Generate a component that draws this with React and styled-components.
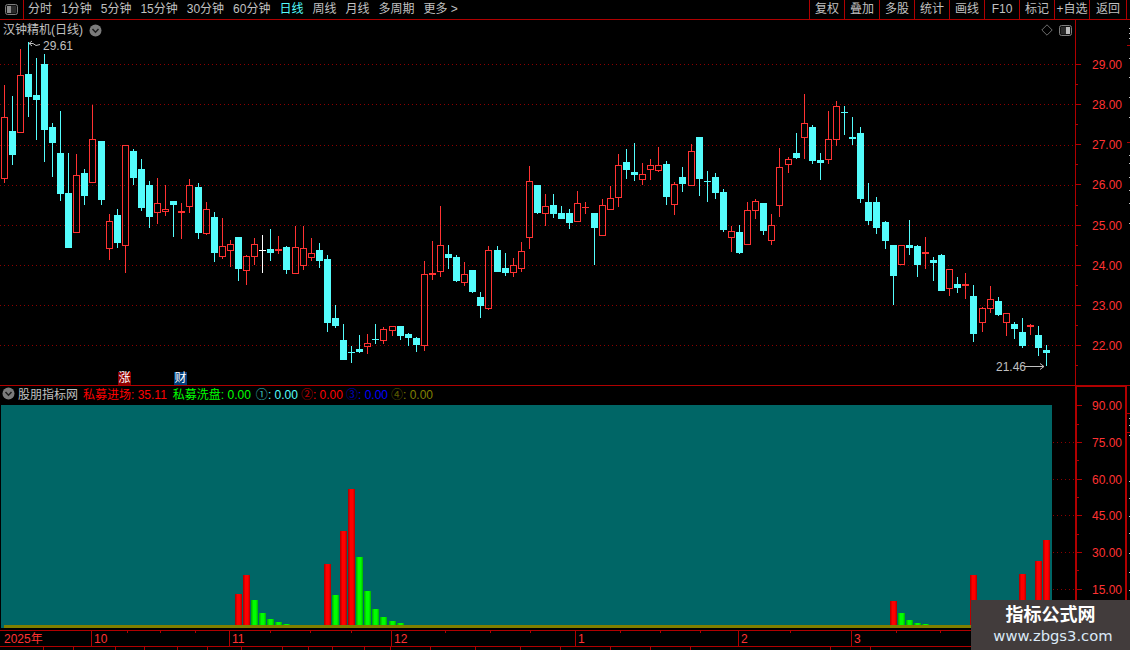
import React from "react";
import styled, { createGlobalStyle } from "styled-components";

const AXIS = "#b00000";
const LABEL = "#ff3232";
const UP = "#ff3232";
const DOWN = "#54fcfc";
const FONT = '"Liberation Sans", "Noto Sans CJK SC", sans-serif';

const Global = createGlobalStyle`
  html, body { margin: 0; padding: 0; background: #000; }
  body { font-family: ${FONT}; font-size: 12px; color: #c0c0c0; }
`;

const Screen = styled.div`
  position: relative;
  width: 1130px;
  height: 650px;
  overflow: hidden;
  background: #000;
  display: flex;
  flex-direction: column;
`;

/* ---------- toolbar ---------- */
const Toolbar = styled.div`
  display: flex;
  align-items: stretch;
  height: 19px;
  border-bottom: 1px solid ${AXIS};
  flex: none;
`;
const ToggleCell = styled.div`
  width: 23px;
  border-right: 1px solid ${AXIS};
  display: flex;
  align-items: center;
  justify-content: center;
  box-sizing: content-box;
  margin-right: 4px;
`;
const Periods = styled.div`
  display: flex;
  align-items: center;
  gap: 9px;
  flex: 1;
`;
const Period = styled.span`
  color: ${(p) => (p.$active ? DOWN : "#c0c0c0")};
  white-space: nowrap;
  line-height: 19px;
`;
const Actions = styled.div`
  display: flex;
  align-items: stretch;
  margin-right: 3px;
`;
const Action = styled.div`
  width: 34px;
  border-left: 1px solid ${AXIS};
  text-align: center;
  line-height: 19px;
  white-space: nowrap;
  color: #c0c0c0;
  &:last-child {
    width: 36px;
    border-right: 1px solid ${AXIS};
  }
`;

/* ---------- panes ---------- */
const Pane = styled.div`
  display: flex;
  flex: none;
  height: ${(p) => p.$h}px;
  border-bottom: ${(p) => (p.$line ? `1px solid ${AXIS}` : "none")};
`;
const Plot = styled.div`
  position: relative;
  width: 1075px;
  flex: none;
`;
const ChartSvg = styled.svg`
  display: block;
  shape-rendering: crispEdges;
`;
const PaneTitle = styled.div`
  position: absolute;
  left: 3px;
  top: 2px;
  display: flex;
  align-items: center;
  gap: 6px;
  line-height: 16px;
  white-space: nowrap;
`;
const PriceNote = styled.span`
  position: absolute;
  left: ${(p) => p.$x}px;
  top: ${(p) => p.$y}px;
  line-height: 14px;
  color: #c0c0c0;
`;
const NewsBadge = styled.span`
  position: absolute;
  left: ${(p) => p.$x}px;
  top: 352px;
  width: 13px;
  height: 13px;
  line-height: 13px;
  text-align: center;
  color: #fff;
  background: ${(p) => p.$bg};
`;
const CornerIcons = styled.div`
  position: absolute;
  right: 3px;
  top: 4px;
  display: flex;
  gap: 6px;
  align-items: center;
`;

/* ---------- axes ---------- */
const Axis = styled.div`
  position: relative;
  width: 52px;
  box-sizing: border-box;
  flex: none;
  display: flex;
  flex-direction: column;
  padding-top: ${(p) => p.$pad}px;
  border-left: ${(p) => p.$thick}px solid ${AXIS};
  border-top: ${(p) => (p.$thick > 1 ? `2px solid ${AXIS}` : "none")};
  border-right: ${(p) => (p.$thick > 1 ? `2px solid ${AXIS}` : "none")};
  margin-top: ${(p) => (p.$thick > 1 ? "-1px" : "0")};
`;
const AxisRow = styled.div`
  position: relative;
  flex: none;
  box-sizing: border-box;
  height: ${(p) => p.$h}px;
  display: flex;
  align-items: center;
  padding-top: 2px;
  padding-left: ${(p) => 16 - (p.$thick - 1)}px;
  color: ${LABEL};
  &::before {
    content: "";
    position: absolute;
    left: 0;
    top: 50%;
    width: 5px;
    height: 1px;
    background: ${AXIS};
  }
  &::after {
    content: "";
    position: absolute;
    left: 0;
    top: 100%;
    width: 2px;
    height: 1px;
    background: ${AXIS};
  }
`;
const SideStrip = styled.svg`
  flex: none;
  width: 3px;
  height: 626px;
  position: absolute;
  left: 1127px;
  top: 20px;
  shape-rendering: crispEdges;
`;

/* ---------- indicator header ---------- */
const IndicatorHeader = styled.div`
  position: absolute;
  left: 2px;
  top: -2px;
  height: 19px;
  display: flex;
  align-items: center;
  white-space: nowrap;
`;
const IndicatorName = styled.span`
  margin: 0 5px 0 3px;
  color: #c0c0c0;
`;
const Reading = styled.span`
  color: ${(p) => p.$c};
  margin-right: ${(p) => p.$gap}px;
`;
const Circled = styled.span`
  font-family: "Noto Sans CJK SC", sans-serif;
  opacity: 0.72;
`;

/* ---------- time axis ---------- */
const TimeAxis = styled.div`
  position: relative;
  flex: none;
  display: flex;
  width: 1127px;
  height: 15px;
  border-top: 1px solid ${AXIS};
  border-bottom: 1px solid ${AXIS};
`;
const Month = styled.div`
  box-sizing: border-box;
  width: ${(p) => p.$w}px;
  flex: ${(p) => (p.$grow ? "1" : "none")};
  padding-left: ${(p) => (p.$first ? 4 : 2)}px;
  border-left: ${(p) => (p.$first ? "none" : `1px solid ${AXIS}`)};
  color: ${LABEL};
  line-height: 17px;
`;
const Tick = styled.i`
  position: absolute;
  left: ${(p) => p.$x}px;
  top: 0;
  width: 1px;
  height: 2px;
  background: ${AXIS};
`;
const BottomStrip = styled.div`
  position: relative;
  flex: 1;
`;
const BottomTick = styled(Tick)`
  height: 4px;
`;

/* ---------- watermark ---------- */
const Watermark = styled.div`
  position: absolute;
  left: 971px;
  top: 600px;
  width: 159px;
  height: 50px;
  background: #423c3c;
  display: flex;
  flex-direction: column;
  align-items: center;
`;
const WatermarkTitle = styled.div`
  font-size: 18px;
  font-weight: 700;
  line-height: 22px;
  margin-top: 4px;
  color: #fff;
`;
const WatermarkUrl = styled.div`
  font-family: "DejaVu Sans", sans-serif;
  font-size: 14.75px;
  line-height: 18px;
  margin: 1px 0 0 5px;
  color: #dbe9f7;
`;

/* ---------- data ---------- */
const groups = [
  { x0: 0, y0: 40, rows: [
    ["r",13,135,232,418,428],["c",37,168,273,345,375],["r",61,27,106,280,280],["c",85,5,102,171,231],
    ["c",109,54,165,180,300],["c",133,42,72,270,366],["c",157,250,261,309,411],["c",181,213,339,462,483],
    ["c",205,339,459,624,624],["r",229,342,405,579,579],["c",253,387,399,468,495],["r",277,195,297,429,429],
    ["c",304,303,303,480,495],["r",328,522,543,627,660],["c",352,507,525,609,624],["r",376,315,315,618,699],
    ["c",400,327,333,414,435],["c",424,357,387,504,513],["c",448,423,435,531,564],["r",472,414,489,519,552],
    ["r",496,435,507,516,528],["c",520,483,483,495,591],["f",544,489,513,519,597],["r",568,417,435,501,519],
    ["c",595,429,441,579,597],["r",619,486,507,582,585],["c",643,516,531,639,666],["r",667,534,618,651,657],
    ["r",691,600,612,633,681],["c",715,591,591,687,723],["r",739,645,648,693,735],["r",763,594,612,651,675],
    ["w",787,585,630,633,699],["c",811,567,627,639,663],["f",835,588,627,631,642],
  ]},
  { x0: 280, y0: 130, rows: [
    ["c",19,348,351,420,432],["r",46,288,351,432,432],["r",70,288,354,408,420],["r",94,324,369,384,393],
    ["c",118,339,360,393,414],["c",142,375,387,579,606],["c",166,525,564,588,594],["c",190,582,630,690,690],
    ["x",214,648,666,668,699],["c",238,615,657,666,669],["r",262,612,639,651,672],["x",286,582,627,629,642],
    ["r",310,591,597,633,642],["r",337,588,588,603,618],["c",361,588,588,618,630],["c",385,609,612,624,648],
    ["c",409,621,624,645,666],["r",433,393,432,648,663],["f",457,333,429,435,450],["r",481,228,345,426,441],
    ["c",505,345,372,384,417],["c",529,375,381,453,456],["r",553,396,432,459,468],["c",577,420,420,486,489],
    ["c",601,486,501,528,564],["r",625,348,360,537,540],["c",652,348,360,426,426],["c",676,369,414,429,438],
    ["r",700,384,405,429,441],["r",724,336,363,417,426],["r",748,108,153,324,357],["c",772,165,165,249,252],
  ]},
  { x0: 520, y0: 90, rows: [
    ["r",76,312,348,372,408],["c",100,312,345,372,384],["c",124,348,369,387,387],["c",148,357,369,399,417],
    ["r",172,303,339,396,396],["y",196,336,351,353,372],["c",223,369,369,414,525],["r",247,327,345,438,438],
    ["r",271,288,324,360,360],["r",295,192,225,324,351],["c",319,177,216,240,267],["c",343,159,246,255,273],
    ["r",367,219,252,270,285],["r",391,207,225,240,270],["r",415,171,225,243,246],["c",439,213,222,321,345],
    ["r",463,276,282,345,375],["c",487,231,261,282,306],["r",514,162,183,288,288],["c",538,141,141,267,318],
    ["x",562,243,273,275,336],["c",586,249,261,309,327],["c",610,297,306,420,426],["r",634,408,423,444,486],
    ["c",658,405,426,489,492],["r",682,336,360,465,465],["r",706,327,333,363,387],["c",730,339,339,423,435],
    ["r",754,372,405,453,465],["r",778,174,231,348,381],["r",805,201,207,225,249],["c",829,129,189,204,207],
  ]},
  { x0: 770, y0: 90, rows: [
    ["r",103,12,99,144,207],["c",127,105,111,213,222],["c",151,189,210,219,270],["r",175,63,147,210,222],
    ["r",199,33,48,150,168],["x",223,48,66,68,135],["c",247,81,141,147,165],["c",271,111,129,327,339],
    ["c",295,279,336,393,405],["c",319,321,336,414,432],["c",346,393,396,453,477],["c",370,465,465,558,645],
    ["r",394,465,465,525,525],["c",418,390,465,474,495],["c",442,465,468,525,561],["f",466,441,486,492,537],
    ["c",490,501,510,519,573],["c",514,492,495,603,603],["r",538,537,537,597,618],["c",562,561,582,594,609],
    ["f",586,549,582,588,627],["c",610,585,618,732,756],["r",637,651,654,699,726],["r",661,588,627,657,669],
    ["c",685,621,633,675,678],["r",709,669,669,699,738],["c",733,696,702,717,747],["c",757,684,726,768,774],
    ["f",781,702,705,711,735],["c",805,708,735,774,798],["c",829,765,780,789,828],
  ]},
];

const candles = groups.flatMap(({ x0, y0, rows }) =>
  rows.map(([t, cx, hi, top, bot, lo]) => ({
    t,
    x: Math.floor(x0 + cx / 3),
    hi: Math.round(y0 + hi / 3),
    top: Math.round(y0 + top / 3),
    bot: Math.round(y0 + bot / 3),
    lo: Math.round(y0 + lo / 3),
  }))
);

const toBars = (x0, y0, rows) => rows.map(([k, cx, z]) => ({ k, x: Math.floor(x0 + cx / 3), top: Math.round(y0 + z / 3) }));
const bars = [
  ...toBars(220, 480, [
    ["r",55,342],["r",79,285],["g",103,360],["g",127,399],["g",151,417],["g",175,426],["g",199,432],
    ["r",322,252],["g",346,345],["r",370,153],["r",394,27],["g",418,231],["g",442,333],["g",466,387],
    ["g",490,411],["g",517,423],["g",541,429],
  ]),
  ...toBars(880, 540, [
    ["r",40,183],["g",64,219],["g",88,240],["g",112,249],["g",136,252],["r",280,105],["r",427,102],["r",475,63],["r",499,0],
  ]),
];

const Candle = ({ t, x, hi, top, bot, lo }) => {
  const color = { r: UP, f: UP, y: UP, c: DOWN, x: DOWN, w: "#ffffff" }[t];
  if (t === "r") {
    return (
      <g fill={color}>
        <rect x={x} y={hi} width={1} height={Math.max(top - hi, 0)} />
        <rect x={x} y={bot} width={1} height={Math.max(lo - bot, 0)} />
        <rect x={x - 3 + 0.5} y={top + 0.5} width={6} height={bot - top - 1} fill="none" stroke={color} strokeWidth={1} />
      </g>
    );
  }
  const bodyH = t === "c" ? bot - top : t === "f" ? 2 : 1;
  return (
    <g fill={color}>
      <rect x={x} y={hi} width={1} height={lo - hi} />
      <rect x={x - 3} y={top} width={7} height={bodyH} />
    </g>
  );
};

const priceY = [64, 104, 145, 185, 225, 265, 305, 345];
const priceLabels = ["29.00", "28.00", "27.00", "26.00", "25.00", "24.00", "23.00", "22.00"];
const indicatorLabels = ["90.00", "75.00", "60.00", "45.00", "30.00", "15.00"];
const indicatorY = [442, 479, 515, 552, 589];
const months = [
  { w: 91, t: "2025年", first: true }, { w: 138, t: "10" }, { w: 162, t: "11" },
  { w: 184, t: "12" }, { w: 163, t: "1" }, { w: 113, t: "2" }, { w: 0, t: "3", grow: true },
];
const upperTicks = [127, 160, 195, 270, 310, 351, 445, 490, 530, 620, 660, 700, 790, 896, 940];
const lowerTicks = [43, 73, 115, 144, 177, 207, 241, 282, 308, 332, 364, 390, 430, 475, 520, 560, 610, 650, 690, 830, 870];
const sideWhite = [8, 13, 18, 38, 57, 77, 97, 135, 143, 157, 170, 183, 203, 398, 405, 415, 461, 478, 496, 513, 533, 552, 570, 588];
const sideRed = [25, 122, 393, 412];

const ChevronBadge = () => (
  <svg width="13" height="13" viewBox="0 0 13 13">
    <circle cx="6.5" cy="6.5" r="6" fill="#7b7b7b" />
    <path d="M3.5 5 L6.5 8.2 L9.5 5" fill="none" stroke="#1c1c1c" strokeWidth="1.5" />
  </svg>
);
const PanelIcon = ({ side }) => (
  <svg width="13" height="11" viewBox="0 0 13 11">
    <rect x="0.5" y="0.5" width="12" height="10" rx="2" fill="#111" stroke="#7d7d7d" />
    <rect x={side === "left" ? 2 : 7} y="2" width="4" height="7" fill={side === "left" ? "#8c8c8c" : "#bdbdbd"} />
    <rect x={side === "left" ? 6 : 2} y="2" width="5" height="7" fill="#2a2a2a" />
  </svg>
);
const DiamondIcon = () => (
  <svg width="12" height="12" viewBox="0 0 12 12">
    <path d="M6 .8 L11.2 6 L6 11.2 L.8 6 Z" fill="none" stroke="#6e6e6e" />
  </svg>
);

export default function App() {
  return (
    <Screen>
      <Global />
      <Toolbar>
        <ToggleCell><PanelIcon side="left" /></ToggleCell>
        <Periods>
          <Period>分时</Period>
          <Period>1分钟</Period>
          <Period>5分钟</Period>
          <Period>15分钟</Period>
          <Period>30分钟</Period>
          <Period>60分钟</Period>
          <Period $active>日线</Period>
          <Period>周线</Period>
          <Period>月线</Period>
          <Period>多周期</Period>
          <Period>更多 &gt;</Period>
        </Periods>
        <Actions>
          {["复权", "叠加", "多股", "统计", "画线", "F10", "标记", "+自选", "返回"].map((a) => (
            <Action key={a}>{a}</Action>
          ))}
        </Actions>
      </Toolbar>

      <Pane $h={365} $line>
        <Plot>
          <ChartSvg width="1075" height="365" viewBox="0 20 1075 365">
            {priceY.map((y) => (
              <line key={y} x1="0" x2="1075" y1={y + 0.5} y2={y + 0.5} stroke="#8c0000" strokeDasharray="1 3" />
            ))}
            {candles.map((c, i) => <Candle key={i} {...c} />)}
            <path d="M29 43.5 H33 M29 43.5 L32 41 M29 43.5 L32 46 M33 43.5 L36 45.5 L40 44.5" fill="none" stroke="#c0c0c0" shapeRendering="auto" />
            <path d="M1025 366.5 H1044 M1040 363.5 L1044 366.5 L1040 369.5" fill="none" stroke="#c0c0c0" shapeRendering="auto" />
          </ChartSvg>
          <PaneTitle>
            <span>汉钟精机(日线)</span>
            <ChevronBadge />
          </PaneTitle>
          <PriceNote $x={43} $y={19}>29.61</PriceNote>
          <PriceNote $x={996} $y={340}>21.46</PriceNote>
          <NewsBadge $x={118} $bg="#8c0000">涨</NewsBadge>
          <NewsBadge $x={174} $bg="#003c78">财</NewsBadge>
          <CornerIcons>
            <DiamondIcon />
            <PanelIcon side="right" />
          </CornerIcons>
        </Plot>
        <Axis $thick={1} $pad={24}>
          {priceLabels.map((l) => (
            <AxisRow key={l} $h={40.14} $thick={1}>{l}</AxisRow>
          ))}
        </Axis>
      </Pane>

      <Pane $h={244}>
        <Plot>
          <ChartSvg width="1075" height="244" viewBox="0 386 1075 244">
            <defs>
              <linearGradient id="barRed">
                <stop offset="0" stopColor="#a80000" />
                <stop offset="0.35" stopColor="#ff0000" />
                <stop offset="0.7" stopColor="#ff0000" />
                <stop offset="1" stopColor="#b00000" />
              </linearGradient>
              <linearGradient id="barGreen">
                <stop offset="0" stopColor="#00a800" />
                <stop offset="0.35" stopColor="#00ff00" />
                <stop offset="0.7" stopColor="#00ff00" />
                <stop offset="1" stopColor="#00b000" />
              </linearGradient>
            </defs>
            <rect x="1" y="405" width="1051" height="223" fill="#006666" />
            {indicatorY.map((y) => (
              <line key={y} x1="1053" x2="1075" y1={y + 0.5} y2={y + 0.5} stroke="#8c0000" strokeDasharray="1 3" />
            ))}
            {bars.map((b, i) => (
              <rect key={i} x={b.x - 3} y={b.top} width="7" height={625 - b.top} fill={b.k === "r" ? "url(#barRed)" : "url(#barGreen)"} />
            ))}
            <rect x="4" y="625" width="1048" height="3" fill="#808000" />
          </ChartSvg>
          <IndicatorHeader>
            <ChevronBadge />
            <IndicatorName>股朋指标网</IndicatorName>
            <Reading $c="#ff0000" $gap={6}>私募进场: 35.11</Reading>
            <Reading $c="#00ff00" $gap={5}>私募洗盘: 0.00</Reading>
            <Reading $c="#54fcfc" $gap={3}><Circled>①</Circled>: 0.00</Reading>
            <Reading $c="#ff0000" $gap={3}><Circled>②</Circled>: 0.00</Reading>
            <Reading $c="#0000ff" $gap={3}><Circled>③</Circled>: 0.00</Reading>
            <Reading $c="#808000" $gap={3}><Circled>④</Circled>: 0.00</Reading>
          </IndicatorHeader>
        </Plot>
        <Axis $thick={2} $pad={0}>
          {indicatorLabels.map((l) => (
            <AxisRow key={l} $h={36.7} $thick={2}>{l}</AxisRow>
          ))}
        </Axis>
      </Pane>

      <TimeAxis>
        {months.map((m) => (
          <Month key={m.t} $w={m.w} $first={m.first} $grow={m.grow}>{m.t}</Month>
        ))}
        {upperTicks.map((x) => <Tick key={x} $x={x} />)}
      </TimeAxis>
      <BottomStrip>
        {lowerTicks.map((x) => <BottomTick key={x} $x={x} />)}
      </BottomStrip>

      <SideStrip viewBox="0 20 3 626">
        {sideWhite.map((y) => <rect key={y} x="2" y={y + 20} width="1" height="1" fill="#c0c0c0" />)}
        {sideRed.map((y) => <rect key={y} x="0" y={y + 20} width="3" height="1" fill={AXIS} />)}
      </SideStrip>

      <Watermark>
        <WatermarkTitle>指标公式网</WatermarkTitle>
        <WatermarkUrl>www.zbgs3.com</WatermarkUrl>
      </Watermark>
    </Screen>
  );
}
